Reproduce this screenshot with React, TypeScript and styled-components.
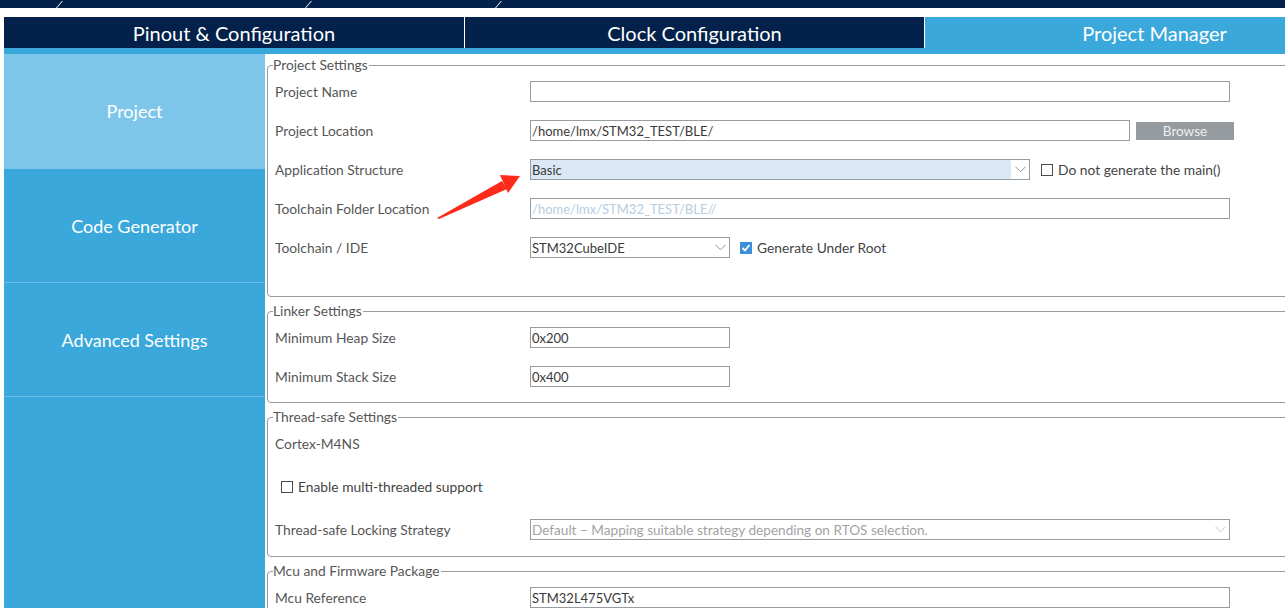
import React from "react";
import styled, { createGlobalStyle } from "styled-components";

const GlobalStyle = createGlobalStyle`
  html, body { margin: 0; padding: 0; background: #ffffff; }
  body { font-family: "Lato", "Open Sans", sans-serif; overflow: hidden; }
  * { box-sizing: border-box; }
`;

const NAVY = "#03214a";
const BLUE = "#3aa8db";
const LIGHT = "#7ec6e9";
const BORDER = "#979ca1";
const LABEL = "#565656";

const Root = styled.div`
  position: relative;
  width: 1285px;
  height: 608px;
  overflow: hidden;
  background: #fff;
`;

const TopBar = styled.div`
  height: 8px;
  background: ${NAVY};
  display: flex;
  align-items: flex-end;
  overflow: visible;
`;

const Slash = styled.span<{ $at: number }>`
  display: block;
  margin-left: ${(p) => p.$at}px;
  width: 1px;
  height: 7px;
  background: #fff;
  transform: skewX(-40deg);
  transform-origin: bottom;
`;

const Main = styled.div`
  margin-top: 9px;
  padding-left: 4px;
`;

const TabBar = styled.div`
  display: flex;
  height: 31px;
  gap: 1px;
  width: 1500px;
`;

const Tab = styled.div<{ $active?: boolean; $w: number }>`
  flex: 0 0 ${(p) => p.$w}px;
  background: ${(p) => (p.$active ? BLUE : NAVY)};
  color: #fff;
  font-family: "Lato", sans-serif;
  font-size: 20px;
  display: flex;
  align-items: center;
  justify-content: center;
  padding-top: 1px;
`;

const Strip = styled.div`
  height: 6px;
  background: ${BLUE};
`;

const Body = styled.div`
  display: flex;
  height: 554px;
`;

const Sidebar = styled.nav`
  flex: 0 0 261px;
  background: ${BLUE};
  display: flex;
  flex-direction: column;
`;

const SideItem = styled.div<{ $active?: boolean }>`
  height: ${(p) => (p.$active ? 115 : 114)}px;
  background: ${(p) => (p.$active ? LIGHT : BLUE)};
  border-bottom: 1px solid ${(p) => (p.$active ? LIGHT : "#6cbde6")};
  color: #fff;
  font-size: 18px;
  display: flex;
  align-items: center;
  justify-content: center;
`;

const Content = styled.div`
  flex: 1;
  padding: 4px 0 0 2px;
  display: flex;
  flex-direction: column;
  gap: 7px;
  overflow: hidden;
`;

const Group = styled.fieldset<{ $pb: number }>`
  margin: 0;
  width: calc(100% + 12px);
  border: 1px solid ${BORDER};
  border-radius: 4px;
  padding: 0 0 ${(p) => p.$pb}px 7px;
  min-width: 0;
`;

const Legend = styled.legend`
  font-size: 13.8px;
  line-height: 14px;
  color: ${LABEL};
  padding: 0 1px 0 0;
  margin-left: -2px;
`;

const Row = styled.div<{ $h?: number }>`
  display: flex;
  align-items: center;
  height: ${(p) => p.$h ?? 39}px;
`;

const Label = styled.div`
  flex: 0 0 255px;
  font-size: 13.8px;
  color: ${LABEL};
`;

const Plain = styled.div`
  font-size: 13.8px;
  color: ${LABEL};
`;

const Input = styled.div<{ $w: number; $muted?: boolean }>`
  width: ${(p) => p.$w}px;
  height: 21px;
  border: 1px solid ${BORDER};
  background: #fff;
  font-size: 13px;
  color: ${(p) => (p.$muted ? "#b7cde0" : "#3a3a3a")};
  padding: 0 0 0 1px;
  display: flex;
  align-items: center;
  white-space: nowrap;
  overflow: hidden;
`;

const Select = styled.div<{ $w: number; $muted?: boolean }>`
  width: ${(p) => p.$w}px;
  height: 21px;
  border: 1px solid ${BORDER};
  background: #fff;
  display: flex;
  align-items: stretch;
  font-size: ${(p) => (p.$muted ? 13.6 : 13)}px;
  color: ${(p) => (p.$muted ? "#a3a3a3" : "#3a3a3a")};
`;

const SelectValue = styled.div<{ $fill?: string }>`
  flex: 1;
  background: ${(p) => p.$fill ?? "#fff"};
  display: flex;
  align-items: center;
  padding-left: 1px;
  white-space: nowrap;
  overflow: hidden;
`;

const SelectArrow = styled.div`
  flex: 0 0 18px;
  display: flex;
  align-items: center;
  justify-content: center;
`;

const Browse = styled.div`
  margin-left: 6px;
  width: 98px;
  height: 18px;
  background: #969ba0;
  color: #eceff1;
  font-size: 13.5px;
  display: flex;
  align-items: center;
  justify-content: center;
`;

const Check = styled.label<{ $ml: number }>`
  margin-left: ${(p) => p.$ml}px;
  display: flex;
  align-items: center;
  gap: 5px;
  font-size: 13.8px;
  color: #444;
`;

const Box = styled.span<{ $checked?: boolean }>`
  width: 12px;
  height: 12px;
  border: 1px solid ${(p) => (p.$checked ? "#3a8fd6" : "#4a4a4a")};
  background: ${(p) => (p.$checked ? "#3a8fd6" : "#fff")};
  display: flex;
  align-items: center;
  justify-content: center;
`;

const ArrowOverlay = styled.svg`
  position: absolute;
  left: 430px;
  top: 168px;
  pointer-events: none;
`;

const Chevron = ({ color = "#8a8f94" }: { color?: string }) => (
  <svg width="11" height="7" viewBox="0 0 11 7">
    <polyline points="0.5,0.8 5.5,5.8 10.5,0.8" fill="none" stroke={color} strokeWidth="1" />
  </svg>
);

const Tick = () => (
  <svg width="10" height="10" viewBox="0 0 10 10">
    <polyline points="1.5,5 4,7.5 8.5,2" fill="none" stroke="#fff" strokeWidth="1.8" />
  </svg>
);

export default function App() {
  return (
    <Root>
      <GlobalStyle />
      <TopBar>
        <Slash $at={56} />
        <Slash $at={248} />
        <Slash $at={189} />
      </TopBar>
      <Main>
        <TabBar>
          <Tab $w={460}>Pinout &amp; Configuration</Tab>
          <Tab $w={459}>Clock Configuration</Tab>
          <Tab $w={459} $active>
            Project Manager
          </Tab>
        </TabBar>
        <Strip />
        <Body>
          <Sidebar>
            <SideItem $active>Project</SideItem>
            <SideItem>Code Generator</SideItem>
            <SideItem>Advanced Settings</SideItem>
          </Sidebar>
          <Content>
            <Group $pb={29}>
              <Legend>Project Settings</Legend>
              <Row>
                <Label>Project Name</Label>
                <Input $w={700} />
              </Row>
              <Row>
                <Label>Project Location</Label>
                <Input $w={600}>/home/lmx/STM32_TEST/BLE/</Input>
                <Browse>Browse</Browse>
              </Row>
              <Row>
                <Label>Application Structure</Label>
                <Select $w={500}>
                  <SelectValue $fill="#dae8f5">Basic</SelectValue>
                  <SelectArrow>
                    <Chevron />
                  </SelectArrow>
                </Select>
                <Check $ml={11}>
                  <Box />
                  Do not generate the main()
                </Check>
              </Row>
              <Row>
                <Label>Toolchain Folder Location</Label>
                <Input $w={700} $muted>
                  /home/lmx/STM32_TEST/BLE//
                </Input>
              </Row>
              <Row>
                <Label>Toolchain / IDE</Label>
                <Select $w={200}>
                  <SelectValue>STM32CubeIDE</SelectValue>
                  <SelectArrow>
                    <Chevron />
                  </SelectArrow>
                </Select>
                <Check $ml={10}>
                  <Box $checked>
                    <Tick />
                  </Box>
                  Generate Under Root
                </Check>
              </Row>
            </Group>
            <Group $pb={6}>
              <Legend>Linker Settings</Legend>
              <Row>
                <Label>Minimum Heap Size</Label>
                <Input $w={200}>0x200</Input>
              </Row>
              <Row>
                <Label>Minimum Stack Size</Label>
                <Input $w={200}>0x400</Input>
              </Row>
            </Group>
            <Group $pb={7}>
              <Legend>Thread-safe Settings</Legend>
              <Row>
                <Plain>Cortex-M4NS</Plain>
              </Row>
              <Row $h={47}>
                <Check $ml={6}>
                  <Box />
                  Enable multi-threaded support
                </Check>
              </Row>
              <Row>
                <Label>Thread-safe Locking Strategy</Label>
                <Select $w={700} $muted>
                  <SelectValue>Default – Mapping suitable strategy depending on RTOS selection.</SelectValue>
                  <SelectArrow>
                    <Chevron color="#c4c8cc" />
                  </SelectArrow>
                </Select>
              </Row>
            </Group>
            <Group $pb={4}>
              <Legend>Mcu and Firmware Package</Legend>
              <Row>
                <Label>Mcu Reference</Label>
                <Input $w={700}>STM32L475VGTx</Input>
              </Row>
            </Group>
          </Content>
        </Body>
      </Main>
      <ArrowOverlay width="96" height="54" viewBox="0 0 96 54">
        <polygon points="7,50 72,13 77,21 9,51" fill="#ff2a1a" />
        <polygon points="90,8 70,7 78,25" fill="#ff2a1a" />
      </ArrowOverlay>
    </Root>
  );
}
